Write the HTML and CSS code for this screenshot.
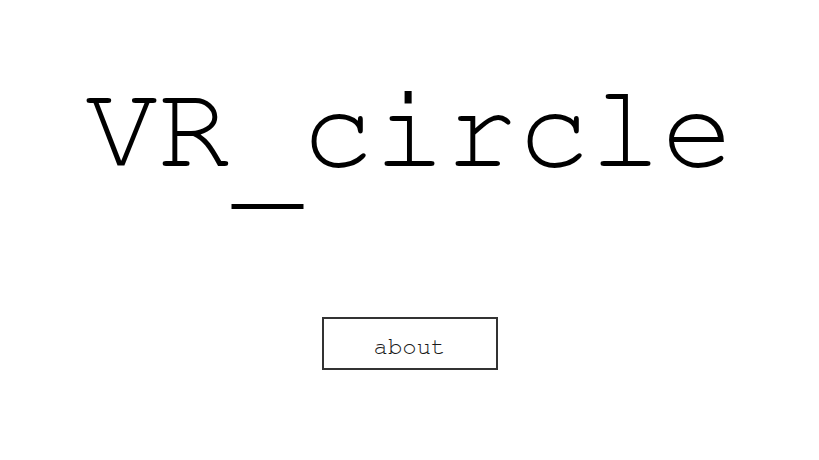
FILE: index.html
```html
<!DOCTYPE html>
<html>
<head>
<meta charset="utf-8">
<link rel="stylesheet" href="styles.css">
</head>
<body>
<main class="page">
  <h1 class="title">VR<span class="low">_</span>circle</h1>
  <a class="about-btn" href="#">about</a>
</main>
</body>
</html>
```
FILE: styles.css
```css
html, body {
  margin: 0;
  padding: 0;
  background: #ffffff;
}
.page {
  display: flex;
  flex-direction: column;
  align-items: center;
  font-family: FreeMono, "Liberation Mono", monospace;
}
.title {
  margin: 60px 0 0 0;
  font-weight: normal;
  font-size: 120px;
  line-height: 140px;
  color: #000;
}
.low {
  display: inline-block;
  transform: translate(2px, 29px);
}
.about-btn {
  margin-top: 117px;
  box-sizing: border-box;
  width: 176px;
  height: 53px;
  padding-top: 6px;
  border: 2px solid #333;
  display: flex;
  align-items: center;
  justify-content: center;
  font-size: 24px;
  color: #1a1a1a;
  text-decoration: none;
}
```
